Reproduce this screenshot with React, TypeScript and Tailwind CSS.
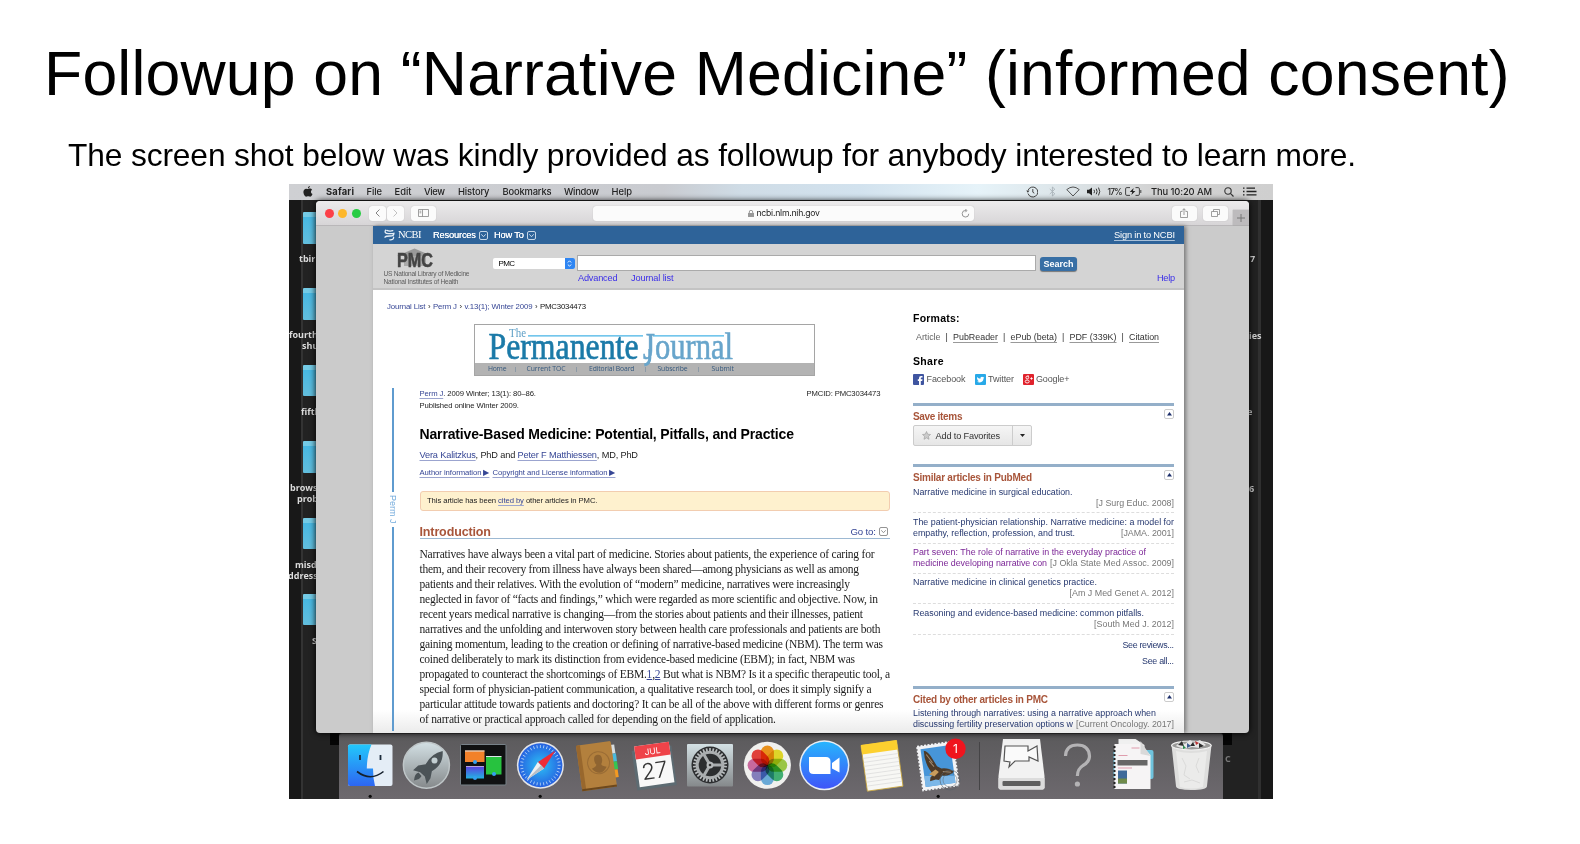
import { useLayoutEffect, useRef, useState } from "react";
import type { ReactNode } from "react";

/** Single line of text tracked out (or in) so that it spans exactly `w` pixels. */
function Fit({ w, className = "", children }: { w: number; className?: string; children: ReactNode }) {
  const ref = useRef<HTMLSpanElement>(null);
  const [tracking, setTracking] = useState(0);
  useLayoutEffect(() => {
    const el = ref.current;
    if (!el) return;
    const count = (el.textContent ?? "").length;
    if (count > 1) setTracking((w - el.getBoundingClientRect().width) / (count - 1));
  }, [w]);
  return (
    <span className={`block shrink-0 whitespace-nowrap ${className}`} style={{ width: w }}>
      <span ref={ref} style={{ letterSpacing: tracking }}>
        {children}
      </span>
    </span>
  );
}

/* ---------- desktop ---------- */

const folders = [
  { labels: [{ t: "tbird", c: "pl-[10px]" }] },
  { labels: [{ t: "fourth", c: "pl-0" }, { t: "shu", c: "pl-[13px]" }] },
  { labels: [{ t: "fifth", c: "pl-[12px]" }] },
  { labels: [{ t: "browse", c: "pl-[1px]" }, { t: "prob", c: "pl-[8px]" }] },
  { labels: [{ t: "misd", c: "pl-[6px]" }, { t: "ddresse", c: "-ml-[1px]" }] },
  { labels: [{ t: "S", c: "pl-[23px]" }] },
];

function Desktop() {
  return (
    <div className="absolute inset-0 flex justify-between bg-[#222] pt-4">
      <div className="flex h-full w-11 flex-col overflow-hidden bg-[linear-gradient(90deg,#181818_0_12px,#333_12px_14px,#222_14px)] pt-3 font-['Open_Sans',sans-serif] text-[9px] font-bold leading-[11px] text-[#dcdcdc]">
        {folders.map((f, i) => (
          <div key={i} className="h-[76.4px] shrink-0">
            <div className="ml-[14px] h-[31.5px] w-8 rounded-[1px] border-t-[5px] border-[#74cbe6] bg-gradient-to-b from-[#47b8e2] to-[#62bedd]" />
            <div className="pt-[9.500px]">
              {f.labels.map((l) => (
                <div key={l.t} className={l.c}>{l.t}</div>
              ))}
            </div>
          </div>
        ))}
      </div>
      <div className="flex h-full w-[49px] flex-col bg-[linear-gradient(90deg,#222_0_34px,#303030_34px_37px,#181818_37px)] pl-[25px] pt-[53px] font-['Open_Sans',sans-serif] text-[9px] font-bold leading-[11px] text-[#d0d0d0]">
        <div className="h-[76.5px] pl-[1px]">7</div>
        <div className="h-[76.5px]">ies</div>
        <div className="h-[76.5px] -ml-[2px]">e</div>
        <div className="h-[270px]">6</div>
        <div className="-ml-6 text-[#777]">C</div>
      </div>
    </div>
  );
}

/* ---------- menu bar ---------- */

function MenuBar() {
  return (
    <div className="relative flex h-4 items-center bg-[linear-gradient(90deg,#cfd0d3_0%,#c9cbd0_38%,#cfdce6_46%,#d2e2ee_58%,#e6f3f9_70%,#dde6ea_78%,#d2d2d2_88%,#cfcfcf_100%)] pb-px font-['Inter',sans-serif] text-[9.4px] font-medium leading-[14px] text-[#222]">
      <svg className="ml-[14px] mb-px h-[11px] w-[10px]" viewBox="0 0 10 11" fill="#222">
        <path d="M6.9 0C7 1 6 2.300 4.900 2.300 4.800 1.200 5.900.1 6.900 0zM5 3c.6 0 1-.4 2-.4.8 0 1.600.4 2.100 1.100C7.300 4.800 7.600 7.200 9.500 7.900 9 9.200 8 10.700 7 10.700c-.7 0-1-.4-1.900-.4-.9 0-1.200.4-1.900.4C1.900 10.700.4 8.200.4 6.100.4 4 1.700 2.700 3.200 2.700 4 2.700 4.500 3 5 3z" />
      </svg>
      <Fit w={28} className="ml-[13px] font-bold">Safari</Fit>
      <Fit w={15.500} className="ml-[12.500px]">File</Fit>
      <Fit w={17} className="ml-[12.500px]">Edit</Fit>
      <Fit w={21} className="ml-[12.500px]">View</Fit>
      <Fit w={31.500} className="ml-[13px]">History</Fit>
      <Fit w={49} className="ml-[13px]">Bookmarks</Fit>
      <Fit w={35} className="ml-[12.500px]">Window</Fit>
      <Fit w={20.500} className="ml-[12.500px]">Help</Fit>
      <svg className="ml-auto h-3 w-3" viewBox="0 0 12 12" fill="none" stroke="#333" strokeWidth=".9">
        <path d="M2 7.500A5 5 0 1 0 2.200 4M6.800 3v3.200l1.500 1" /><path d="M.3 4.500h3.200L1.800 6.800z" fill="#333" stroke="none" />
      </svg>
      <svg className="ml-[11px] h-[11px] w-[7px]" viewBox="0 0 7 11" fill="none" stroke="#a9b2b8" strokeWidth=".9">
        <path d="M.8 3l5 4.800L3.400 10V1l2.400 2.200L.8 8" />
      </svg>
      <svg className="ml-[10px] h-[11px] w-[14px]" viewBox="0 0 14 11" fill="none" stroke="#444" strokeWidth=".9">
        <path d="M.8 3.600Q7-1.600 13.200 3.600L7 10z" />
      </svg>
      <svg className="ml-[7px] h-[11px] w-[15px]" viewBox="0 0 15 11" fill="none" stroke="#222" strokeWidth=".9">
        <path d="M0 3.800h2L5 1.400v8.200L2 7.200H0z" fill="#222" stroke="none" /><path d="M7 3.800q1 1.700 0 3.400M9.200 2.700q1.800 2.800 0 5.600M11.500 1.600q2.500 3.900 0 7.800" />
      </svg>
      <Fit w={15} className="ml-[6px] text-[8.400px]">17%</Fit>
      <svg className="ml-[2px] h-[9px] w-[17px]" viewBox="0 0 17 9" fill="none" stroke="#333" strokeWidth=".9">
        <path d="M5 .6H1.800Q.6.6.6 1.800v5.400q0 1.200 1.200 1.200H5M10.500.6h2.700q1.200 0 1.200 1.200v5.400q0 1.200-1.200 1.200h-2.700M15.800 3v3" /><path d="M8.600 1L4.800 5h2.400l-.8 3L10.400 4H8z" fill="#222" stroke="none" />
      </svg>
      <Fit w={61} className="ml-[9.500px]">Thu 10:20 AM</Fit>
      <svg className="ml-[12px] h-[10px] w-[10px]" viewBox="0 0 10 10" fill="none" stroke="#333" strokeWidth="1.1">
        <circle cx="4" cy="4" r="3.200" /><path d="M6.400 6.400L9.500 9.500" />
      </svg>
      <svg className="ml-[9px] mr-[16px] h-[9px] w-[14px]" viewBox="0 0 14 9" stroke="#222" strokeWidth="1.300">
        <path d="M0 1.200h1.500M0 4.500h1.500M0 7.800h1.500M3.500 1.200H12M3.500 4.500H13.500M3.500 7.800H13.500" />
      </svg>
    </div>
  );
}

/* ---------- Safari toolbar ---------- */

const btn = "flex h-[15px] shrink-0 items-center justify-center rounded-[3px] bg-[#fbfbfb] shadow-[0_0_1px_#aaa]";

function Toolbar() {
  return (
    <div className="flex h-[25px] shrink-0 items-center border-b border-[#b9b7b9] bg-gradient-to-b from-[#ecebec] to-[#d7d5d7] pl-[8.500px]">
      <span className="h-[9px] w-[9px] rounded-full bg-[#fc4048]" />
      <span className="ml-[4.500px] h-[9px] w-[9px] rounded-full bg-[#fdb72b]" />
      <span className="ml-[4.500px] h-[9px] w-[9px] rounded-full bg-[#27cc43]" />
      <span className={`${btn} ml-[8.500px] w-[17px]`}>
        <svg className="h-2 w-[5px]" viewBox="0 0 5 8" fill="none" stroke="#777" strokeWidth=".9"><path d="M4.500.5L1 4l3.500 3.500" /></svg>
      </span>
      <span className={`${btn} ml-px w-[17px]`}>
        <svg className="h-2 w-[5px]" viewBox="0 0 5 8" fill="none" stroke="#bbb" strokeWidth=".9"><path d="M.5.5L4 4 .5 7.500" /></svg>
      </span>
      <span className={`${btn} ml-[7px] w-[25px]`}>
        <svg className="h-2 w-[11px]" viewBox="0 0 11 8" fill="none" stroke="#888" strokeWidth=".8"><path d="M.5.5h10v7H.5zM4.500.5v7M1.500 2.200h1.800M1.500 3.800h1.800" /></svg>
      </span>
      <div className="ml-[156.500px] flex h-[15px] w-[381px] shrink-0 items-center rounded-[3px] bg-[#fbfbfb] shadow-[0_0_1px_#aaa]">
        <svg className="ml-[155px] h-[7px] w-[6px]" viewBox="0 0 6 7"><rect y="3" width="6" height="4" fill="#999" /><path d="M1.300 3V2a1.700 1.700 0 0 1 3.400 0v1" fill="none" stroke="#999" /></svg>
        <Fit w={63.500} className="ml-[3px] font-['Inter',sans-serif] text-[8.700px] leading-[14px] text-[#222]">ncbi.nlm.nih.gov</Fit>
        <svg className="ml-auto mr-1 h-[9px] w-[9px]" viewBox="0 0 9 9" fill="none" stroke="#888" strokeWidth=".9"><path d="M5 1.500A3.300 3.300 0 1 0 7.800 4.800M4.200 0l1.800 1.500L4.400 3.200" /></svg>
      </div>
      <span className={`${btn} ml-[198px] w-[25px]`}>
        <svg className="h-[10px] w-2" viewBox="0 0 8 10" fill="none" stroke="#888" strokeWidth=".8"><path d="M2.500 3.500h-2v6h7v-6h-2M4 7V.8M2.200 2.500L4 .7l1.800 1.800" /></svg>
      </span>
      <span className={`${btn} ml-[6px] w-[25px]`}>
        <svg className="h-2 w-[9px]" viewBox="0 0 9 8" fill="none" stroke="#888" strokeWidth=".8"><path d="M.5 2.500h6v5h-6zM2.500 2.500v-2h6v5h-2" /></svg>
      </span>
      <span className="ml-auto flex h-[15px] w-4 items-center justify-center self-end bg-[#bdbbbd] shadow-[0_0_1px_#888]">
        <svg className="h-2 w-2" viewBox="0 0 8 8" stroke="#777"><path d="M4 0v8M0 4h8" /></svg>
      </span>
    </div>
  );
}

/* ---------- page header ---------- */

function BoxArrow({ className = "", color = "#d7e3ef" }: { className?: string; color?: string }) {
  return (
    <svg className={`h-[9px] w-[9px] shrink-0 ${className}`} viewBox="0 0 9 9" fill="none" stroke={color} strokeWidth=".9">
      <rect x=".5" y=".5" width="8" height="8" rx="1.500" /><path d="M2.300 3.300l2.200 2.400 2.200-2.400" />
    </svg>
  );
}

function NcbiBar() {
  return (
    <div className="flex h-[18px] items-center bg-[#2e6399] pl-[11px] pr-[9px] text-[9.300px] leading-[14px] text-white">
      <svg className="h-[12px] w-[11px]" viewBox="0 0 11 12" fill="none" stroke="#e4edf6" strokeWidth="1.300" strokeLinecap="round">
        <path d="M1.500 1.200Q0 4.600 4.500 4.700T10 4.200M9.800 4.400Q10.200 7 6 7T1 8.200M9.600 8.200Q9.800 11 5.800 10.800M2.800 1.400q3 1.200 6 .2" />
      </svg>
      <Fit w={23.500} className="ml-[3px] font-['Liberation_Serif',serif] text-[10.500px]">NCBI</Fit>
      <Fit w={43} className="ml-[11.500px] [text-shadow:0_0_.5px_#fff]">Resources</Fit>
      <BoxArrow className="ml-[3px]" />
      <Fit w={30} className="ml-[6px] [text-shadow:0_0_.5px_#fff]">How To</Fit>
      <BoxArrow className="ml-[3px]" />
      <Fit w={61} className="ml-auto underline decoration-[#a9c0d8] underline-offset-[1.500px]">Sign in to NCBI</Fit>
    </div>
  );
}

function SearchHeader() {
  return (
    <div className="flex h-[46px] border-b-2 border-[#c3c3c3] bg-[#d4d4d4]">
      <div className="w-[120px] pl-[10.500px] pt-[4px] text-[6.600px] leading-[8px] text-[#5c5c5c]">
        <svg className="mb-[1.500px] ml-[12px] block h-[20px] w-[38px] overflow-visible" viewBox="0 0 38 20">
          <path d="M1 8L18.500.5 36 8z" fill="#999" /><path d="M8 8h22v10H8z" fill="#a9a9a9" />
          <text x="1" y="19" fontFamily="Liberation Sans" fontWeight="700" fontSize="19.500" fill="#444" stroke="#444" strokeWidth=".5" textLength="36" lengthAdjust="spacingAndGlyphs">PMC</text>
        </svg>
        <Fit w={86}>US National Library of Medicine</Fit>
        <Fit w={75}>National Institutes of Health</Fit>
      </div>
      <div className="flex h-[11px] w-[82px] shrink-0 items-center self-start overflow-hidden rounded-[2px] bg-white text-[8px] leading-[11px] mt-[14px]">
        <Fit w={16.500} className="ml-[5.500px]">PMC</Fit>
        <span className="ml-auto flex h-full w-[10.500px] items-center justify-center bg-[#2f86f3]">
          <svg className="h-[7px] w-[5px]" viewBox="0 0 5 7" fill="none" stroke="#fff" strokeWidth=".9"><path d="M.8 2.500L2.500.8l1.700 1.700M.8 4.500l1.700 1.700 1.700-1.700" /></svg>
        </span>
      </div>
      <div className="ml-[2px] pt-[11px]">
        <div className="h-4 w-[458.500px] border border-[#aaa] bg-white" />
        <div className="flex h-[14px] items-center text-[9.200px] leading-[12px] text-[#3b2ee8]">
          <Fit w={39.500} className="ml-px">Advanced</Fit>
          <Fit w={42.500} className="ml-[13.500px]">Journal list</Fit>
        </div>
      </div>
      <div className="flex flex-1 flex-col pt-[12.500px] pl-[4.500px] pr-[9px]">
        <div className="flex h-[14px] w-[37px] items-center justify-center rounded-[3px] bg-[#386fa5] text-[9px] font-bold leading-[12px] text-white shadow-[0_1px_1px_#777]">
          <Fit w={30}>Search</Fit>
        </div>
        <Fit w={18} className="ml-auto text-[9.200px] leading-[14px] text-[#3b2ee8]">Help</Fit>
      </div>
    </div>
  );
}

/* ---------- article ---------- */

const link = "underline decoration-[#9ba4cf] underline-offset-[2px] text-[#364695]";

function JournalBanner() {
  return (
    <div className="ml-[101px] mt-3 flex h-[52px] w-[341px] flex-col border border-[#a5a5a5]">
      <svg className="block h-[38px] w-[339px] shrink-0 overflow-visible relative" viewBox="0 0 339 38">
        <rect y="38" width="339" height="12" fill="#b3b3b3" />
        <path d="M53 10.900H168M178 10.900H249" stroke="#47b4e6" strokeWidth="1.200" />
        <g fontFamily="Liberation Serif">
          <text x="34" y="11.800" fontSize="13" fill="#5d9fc6" textLength="17" lengthAdjust="spacingAndGlyphs">The</text>
          <text x="13.500" y="33.800" fontSize="38.500" fill="#1b7aa8" stroke="#1b7aa8" strokeWidth=".7" textLength="150" lengthAdjust="spacingAndGlyphs">Permanente</text>
          <text x="168" y="33.800" fontSize="38.500" fill="#68a5cb" stroke="#68a5cb" strokeWidth=".6" textLength="90" lengthAdjust="spacingAndGlyphs">Journal</text>
        </g>
        <path d="M174.800 24v9q0 6-5.500 7" stroke="#68a5cb" strokeWidth="3" fill="none" />
      </svg>
      <div className="relative flex h-3 items-center font-['Open_Sans',sans-serif] text-[6.800px] leading-3 text-[#35587d]">
        <Fit w={18.500} className="ml-[13px]">Home</Fit>
        <i className="ml-[8px] h-[5px] w-px bg-[#8d9aa6]" />
        <Fit w={39} className="ml-[11px]">Current TOC</Fit>
        <i className="ml-[10px] h-[5px] w-px bg-[#8d9aa6]" />
        <Fit w={45.500} className="ml-[12.500px]">Editorial Board</Fit>
        <i className="ml-[10px] h-[5px] w-px bg-[#8d9aa6]" />
        <Fit w={30} className="ml-[12px]">Subscribe</Fit>
        <i className="ml-[10px] h-[5px] w-px bg-[#8d9aa6]" />
        <Fit w={22.500} className="ml-[13px]">Submit</Fit>
      </div>
    </div>
  );
}

const bodyLines: { w: number; t: ReactNode }[] = [
  { w: 455, t: "Narratives have always been a vital part of medicine. Stories about patients, the experience of caring for" },
  { w: 439.500, t: "them, and their recovery from illness have always been shared—among physicians as well as among" },
  { w: 430.500, t: "patients and their relatives. With the evolution of “modern” medicine, narratives were increasingly" },
  { w: 458.500, t: "neglected in favor of “facts and findings,” which were regarded as more scientific and objective. Now, in" },
  { w: 443.500, t: "recent years medical narrative is changing—from the stories about patients and their illnesses, patient" },
  { w: 461, t: "narratives and the unfolding and interwoven story between health care professionals and patients are both" },
  { w: 463.500, t: "gaining momentum, leading to the creation or defining of narrative-based medicine (NBM). The term was" },
  { w: 435.500, t: "coined deliberately to mark its distinction from evidence-based medicine (EBM); in fact, NBM was" },
  {
    w: 470.500,
    t: (
      <>
        propagated to counteract the shortcomings of EBM.<span className="text-[#364695] underline">1</span>,
        <span className="text-[#364695] underline">2</span> But what is NBM? Is it a specific therapeutic tool, a
      </>
    ),
  },
  { w: 452, t: "special form of physician-patient communication, a qualitative research tool, or does it simply signify a" },
  { w: 464, t: "particular attitude towards patients and doctoring? It can be all of the above with different forms or genres" },
  { w: 356.500, t: "of narrative or practical approach called for depending on the field of application." },
];

function Article() {
  return (
    <div className="flex w-[540px] shrink-0 flex-col">
      <div className="mt-[9px] flex h-3 items-center pl-[14px] text-[7.800px] leading-3 text-[#364695] mb-px pt-[4px]">
        <Fit w={38.500}>Journal List</Fit>
        <span className="w-[7.500px] text-center text-[#222]">›</span>
        <Fit w={24}>Perm J</Fit>
        <span className="w-[7.500px] text-center text-[#222]">›</span>
        <Fit w={68}>v.13(1); Winter 2009</Fit>
        <span className="w-[7.500px] text-center text-[#222]">›</span>
        <Fit w={46} className="text-[#111]">PMC3034473</Fit>
      </div>
      <JournalBanner />
      <div className="mt-3 flex">
        <div className="flex w-[46.500px] shrink-0 flex-col items-center pr-[6.500px]">
          <span className="h-[103.500px] w-[2.500px] bg-[#5f9bcf]" />
          <span className="flex h-[35.500px] w-3 items-center justify-center text-[9px] leading-3 text-[#72aadb] [writing-mode:vertical-rl]">Perm J</span>
          <span className="h-[204px] w-[2.500px] bg-[#5f9bcf]" />
        </div>
        <div className="w-[470.500px] shrink-0 text-[#222]">
          <div className="flex h-3 items-center justify-between pr-[9.500px] text-[7.700px] leading-3">
            <Fit w={116.500}><span className={link}>Perm J</span>. 2009 Winter; 13(1): 80–86.</Fit>
            <Fit w={74}>PMCID: PMC3034473</Fit>
          </div>
          <Fit w={99.500} className="h-[11px] text-[7.700px] leading-[11px]">Published online Winter 2009.</Fit>
          <h1 className="mt-[13px] text-[14px] font-bold leading-5 text-black"><Fit w={374.500}>Narrative-Based Medicine: Potential, Pitfalls, and Practice</Fit></h1>
          <Fit w={218.500} className="mt-[5px] text-[9.200px] leading-[13px]">
            <span className={link}>Vera Kalitzkus</span>, PhD and <span className={link}>Peter F Matthiessen</span>, MD, PhD
          </Fit>
          <div className="mt-[5px] flex text-[7.700px] leading-3">
            <Fit w={70} className={link}>Author information ▶</Fit>
            <Fit w={123} className={`ml-[3px] ${link}`}>Copyright and License information ▶</Fit>
          </div>
          <div className="mt-3 flex h-5 items-center rounded-[3px] border border-[#f2cdb0] bg-[#fef1ce] pl-[6.500px] text-[7.700px] leading-3">
            <Fit w={170.500}>This article has been <span className={link}>cited by</span> other articles in PMC.</Fit>
          </div>
          <div className="mt-[11px] flex h-[17px] items-center border-b border-[#9db9d3] pr-[2px] pt-[3px]">
            <Fit w={71.500} className="text-[12.500px] font-bold leading-4 text-[#a8553a]">Introduction</Fit>
            <Fit w={25.500} className="ml-auto text-[9.600px] leading-4 text-[#364695]">Go to:</Fit>
            <BoxArrow className="ml-[3px]" color="#888" />
          </div>
          <div className="mt-[8px] font-['Liberation_Serif',serif] text-[11.500px] leading-[15px] text-[#1c1c1c]">
            {bodyLines.map((l, i) => (
              <Fit key={i} w={l.w}>{l.t}</Fit>
            ))}
          </div>
        </div>
      </div>
    </div>
  );
}

/* ---------- sidebar ---------- */

function SectionHead({ w, title }: { w: number; title: string }) {
  return (
    <div className="flex h-5 justify-between border-t-[3.500px] border-[#94afc9] pt-[3px]">
      <Fit w={w} className="pt-px text-[10px] font-bold leading-[13px] text-[#a8553a]">{title}</Fit>
      <span className="flex h-[10px] w-[10px] items-center justify-center rounded-[2px] border border-[#ccc]">
        <svg className="h-1 w-[5px]" viewBox="0 0 5 4" fill="#1d2f6b"><path d="M2.500 0L5 3.500H0z" /></svg>
      </span>
    </div>
  );
}

interface Entry { a: string; aw: number; b?: string; bw?: number; cite: string; cw: number; visited?: boolean }

const similar: Entry[] = [
  { a: "Narrative medicine in surgical education.", aw: 159.500, cite: "[J Surg Educ. 2008]", cw: 78 },
  { a: "The patient-physician relationship. Narrative medicine: a model for", aw: 261, b: "empathy, reflection, profession, and trust.", bw: 162, cite: "[JAMA. 2001]", cw: 53 },
  { a: "Part seven: The role of narrative in the everyday practice of", aw: 233, b: "medicine developing narrative con", bw: 134, cite: "[J Okla State Med Assoc. 2009]", cw: 124, visited: true },
  { a: "Narrative medicine in clinical genetics practice.", aw: 184, cite: "[Am J Med Genet A. 2012]", cw: 104.500 },
  { a: "Reasoning and evidence-based medicine: common pitfalls.", aw: 231, cite: "[South Med J. 2012]", cw: 80 },
];

function EntryRow({ e }: { e: Entry }) {
  return (
    <div className={`text-[8.900px] leading-[11px] ${e.visited ? "text-[#7b2596]" : "text-[#26386f]"}`}>
      <Fit w={e.aw}>{e.a}</Fit>
      <div className="flex">
        {e.b && <Fit w={e.bw ?? 0}>{e.b}</Fit>}
        <Fit w={e.cw} className="ml-auto text-[#777]">{e.cite}</Fit>
      </div>
    </div>
  );
}

const fmt = "underline decoration-[#999] underline-offset-[2px]";

function Sidebar() {
  return (
    <div className="w-[261px] shrink-0 pt-[22px] text-[#333]">
      <Fit w={46.500} className="text-[10.500px] font-bold leading-[13px] text-black">Formats:</Fit>
      <div className="mt-[6px] flex text-[8.900px] leading-3">
        <Fit w={24.500} className="ml-[3px] text-[#666]">Article</Fit>
        <span className="w-[12.500px] text-center">|</span>
        <Fit w={45} className={fmt}>PubReader</Fit>
        <span className="w-[12.500px] text-center">|</span>
        <Fit w={46.500} className={fmt}>ePub (beta)</Fit>
        <span className="w-[12.500px] text-center">|</span>
        <Fit w={47} className={fmt}>PDF (339K)</Fit>
        <span className="w-[12.500px] text-center">|</span>
        <Fit w={30} className={fmt}>Citation</Fit>
      </div>
      <Fit w={30.500} className="mt-[11.500px] text-[10.500px] font-bold leading-[13px] text-black">Share</Fit>
      <div className="mt-[6.500px] flex h-[11px] items-center text-[9px] leading-[11px] text-[#555]">
        <svg className="h-[11px] w-[11px]" viewBox="0 0 11 11"><rect width="11" height="11" rx="1" fill="#3f55a0" /><path d="M6 11V7H4.800V5.300H6V4q0-2 2-2h1.500v1.600H8.400q-.6 0-.6.6v1.100h1.700L9.200 7H7.800v4z" fill="#fff" /></svg>
        <Fit w={39} className="ml-[2.500px]">Facebook</Fit>
        <svg className="ml-[9px] h-[11px] w-[11px]" viewBox="0 0 11 11"><rect width="11" height="11" rx="1" fill="#28a9e8" /><path d="M2 3q1.500 1.600 3.400 1.700Q5.200 2.800 7 2.700q.8 0 1.200.5l1-.3-.6 1 .7-.1-.8.8Q8.300 8.300 4.800 8.500 3 8.500 2 7.700q1.200 0 2-.6Q2.800 6.800 2.600 6H3Q2 5.400 2.100 4.400z" fill="#fff" /></svg>
        <Fit w={26} className="ml-[2.500px]">Twitter</Fit>
        <svg className="ml-[9px] h-[11px] w-[11px]" viewBox="0 0 11 11"><rect width="11" height="11" rx="1" fill="#e0222c" /><g fill="none" stroke="#fff" strokeWidth=".9"><circle cx="4.300" cy="3.500" r="1.400" /><ellipse cx="4.200" cy="7.500" rx="2" ry="1.500" /><path d="M4.500 2H6M7.300 4.500h2.400M8.500 3.300v2.400" /></g></svg>
        <Fit w={33.500} className="ml-[2px]">Google+</Fit>
      </div>
      <div className="mt-[18px]"><SectionHead w={49.500} title="Save items" /></div>
      <div className="mt-[2px] flex h-[21px] w-[119px] items-center rounded-[2px] border border-[#ccc] bg-gradient-to-b from-[#f5f5f5] to-[#e6e6e6]">
        <svg className="ml-[8px] h-[9px] w-[9px]" viewBox="0 0 9 9" fill="#ccc" stroke="#999" strokeWidth=".6"><path d="M4.500.5l1.200 2.700 2.800.3-2.100 1.900.6 2.900-2.500-1.500L2 8.300l.6-2.900L.5 3.500l2.800-.3z" /></svg>
        <Fit w={64.500} className="ml-[4.500px] text-[9.200px] leading-3">Add to Favorites</Fit>
        <span className="ml-auto flex h-full w-[19px] items-center justify-center border-l border-[#ccc]">
          <svg className="h-[3px] w-[5px]" viewBox="0 0 5 3" fill="#222"><path d="M0 0h5L2.500 3z" /></svg>
        </span>
      </div>
      <div className="mt-[18px]"><SectionHead w={119} title="Similar articles in PubMed" /></div>
      <div className="pt-[2.500px]">
        {similar.map((e) => (
          <div key={e.a} className="mb-[3.400px] h-[26.900px] border-b border-dashed border-[#ddd]"><EntryRow e={e} /></div>
        ))}
      </div>
      <div className="mt-[4px] flex flex-col items-end text-[8.900px] leading-[12px] text-[#26386f]">
        <Fit w={51.500}>See reviews...</Fit>
        <Fit w={32} className="mt-[4.500px]">See all...</Fit>
      </div>
      <div className="mt-[18.500px]"><SectionHead w={135} title="Cited by other articles in PMC" /></div>
      <div className="pt-[2.200px]">
        <EntryRow e={{ a: "Listening through narratives: using a narrative approach when", aw: 243, b: "discussing fertility preservation options w", bw: 160, cite: "[Current Oncology. 2017]", cw: 98 }} />
      </div>
    </div>
  );
}

function SafariWindow() {
  return (
    <div className="absolute left-[27px] top-[17px] flex h-[532px] w-[933px] flex-col overflow-hidden rounded-[4px] bg-[#cbcbcb] shadow-[0_0_6px_#000]">
      <Toolbar />
      <div className="ml-[57px] h-[507px] w-[811px] overflow-hidden bg-white shadow-[2px_0_4px_#777]">
        <NcbiBar />
        <SearchHeader />
        <div className="flex h-[443px] overflow-hidden bg-[linear-gradient(180deg,#fff_0_420px,#ebebeb_443px)]">
          <Article />
          <Sidebar />
        </div>
      </div>
    </div>
  );
}

/* ---------- dock ---------- */

const ticks = Array.from({ length: 36 }, (_, i) => i * 10);
const teeth = Array.from({ length: 30 }, (_, i) => i * 12);
const petals = ["#f79a1e", "#ece22c", "#a4d24a", "#45b97a", "#6fb4e6", "#8c86c9", "#d46fa8", "#ee4540"];

const dockApps: { name: string; running?: boolean; art: ReactNode }[] = [
  {
    name: "finder", running: true, art: (
      <>
        <rect x="6" y="10.500" width="44.500" height="41.500" rx="2" fill="#e4edf6" />
        <path d="M8 10.500H29.500Q25 21 24.800 34.500H31Q31 44 33 52H8q-2 0-2-2V12.500q0-2 2-2z" fill="url(#finder)" />
        <path d="M18 21v5M38.500 21v5" stroke="#1b2b3c" strokeWidth="1.800" />
        <path d="M15 37.500Q28.500 48 41.500 37.500" stroke="#15202c" strokeWidth="1.600" fill="none" />
      </>
    ),
  },
  {
    name: "launchpad", art: (
      <>
        <circle cx="28.400" cy="31.300" r="23" fill="url(#silver)" stroke="#bfc6c8" strokeWidth="1.500" />
        <path d="M47 16.500Q48 31 35.500 38L34 45.500l-4 6-2-8-5-4.500-7.500-2 5.500-5 8-1.500Q35 19 47 16.500z" fill="#4b5357" transform="translate(.5 1.500) scale(.94)" /><circle cx="36.500" cy="26.500" r="3" fill="#c3cfd2" /><path d="M20.500 38.500q-4 1-4.500 8 6-1 7.500-4.500z" fill="#4b5357" />
      </>
    ),
  },
  {
    name: "mission", art: (
      <>
        <rect x="5.500" y="10.500" width="45.500" height="40.500" rx="1" fill="#101112" stroke="#78838a" strokeWidth="1" />
        <rect x="10" y="16.500" width="19.500" height="11.500" fill="#f2812a" /><path d="M10 17H29.500" stroke="#dfe5e8" />
        <rect x="11" y="32.500" width="18" height="12" fill="url(#spaces)" /><path d="M11 32.500H29" stroke="#b9a5e0" />
        <rect x="31" y="22.500" width="15.500" height="18" fill="#27c23f" /><path d="M31 22.500H46.500" stroke="#dfe5e8" />
        <circle cx="20" cy="28" r="2" fill="#35a0f0" /><circle cx="20" cy="44" r="2" fill="#35a0f0" /><circle cx="39" cy="40" r="2" fill="#35a0f0" />
      </>
    ),
  },
  {
    name: "safari", running: true, art: (
      <>
        <circle cx="28.400" cy="31.300" r="23.500" fill="#e3e5e8" /><circle cx="28.400" cy="31.300" r="22" fill="url(#compass)" />
        {ticks.map((a) => <path key={a} d="M28.400 11v3" stroke="#cfe6fb" strokeWidth=".7" transform={`rotate(${a} 28.400 31.300)`} />)}
        <path d="M43.500 16.500L32 34.500 26 28z" fill="#ee2b36" /><path d="M14.500 46L25.800 28 32 34.500z" fill="#eef0f2" /><path d="M14.500 46L32 34.500l-3-3.200z" fill="#b8c0c8" />
      </>
    ),
  },
  {
    name: "contacts", art: (
      <g transform="rotate(-8 28 32)">
        <path d="M43 13h5v9h-5z" fill="#d7dde0" /><path d="M43 22h5.500v8H43z" fill="#4ab9dd" /><path d="M43 30h5.500v8H43z" fill="#35c552" /><path d="M43 38h5v8h-5z" fill="#f49a22" />
        <rect x="10" y="9" width="35" height="46" rx="2" fill="#b3803d" /><path d="M10 9h4v46h-4z" fill="#98672d" /><path d="M10 54h35" stroke="#6d481c" strokeWidth="2" />
        <circle cx="30" cy="29" r="11" fill="none" stroke="#9a6c35" strokeWidth="1" /><path d="M26 26q0-5 4-5t4 5q0 3-1.500 4.500 0 2 5 3.500Q34 39 30 39t-7.500-5q5-1.500 5-3.500Q26 29 26 26z" fill="#8f6431" />
      </g>
    ),
  },
  {
    name: "calendar", art: (
      <g transform="rotate(-8 28 32)">
        <rect x="8" y="14" width="40" height="40" fill="#5d6b72" /><rect x="11" y="10" width="35" height="41" fill="#f8f8f8" /><rect x="11" y="10" width="35" height="13" fill="#ef4349" />
        <text x="28.500" y="20" fontSize="8.500" fontFamily="Inter" textAnchor="middle" fill="#fff">JUL</text>
        <text x="28" y="44.500" fontSize="22.500" fontFamily="Inter" fontWeight="300" textAnchor="middle" fill="#333">27</text>
      </g>
    ),
  },
  {
    name: "preferences", art: (
      <>
        <rect x="5" y="10" width="46" height="42.500" rx="1" fill="url(#silver)" />
        <circle cx="28" cy="31" r="18.500" fill="#2c2e30" />
        {teeth.map((a) => <path key={a} d="M28 14v3.500" stroke="#b9bdbf" strokeWidth="1.700" transform={`rotate(${a} 28 31)`} />)}
        <circle cx="28" cy="31" r="12.800" fill="none" stroke="#aaaeb0" strokeWidth="3" />
        <path d="M28 31H40.600M28 31L21.600 20M28 31L21.600 42" stroke="#a8acae" strokeWidth="3" /><circle cx="28" cy="31" r="3.500" fill="#b5b9bb" /><circle cx="28" cy="31" r="1.300" fill="#333" />
      </>
    ),
  },
  {
    name: "photos", art: (
      <>
        <circle cx="28.400" cy="31.300" r="23.500" fill="#f0f0ee" />
        {petals.map((c, i) => <rect key={c} className="mix-blend-multiply" x="21.900" y="11.500" width="13" height="20" rx="6.500" fill={c} transform={`rotate(${i * 45} 28.400 31.300)`} />)}
      </>
    ),
  },
  {
    name: "zoom", art: (
      <>
        <circle cx="28.400" cy="31.300" r="25" fill="#e8eef5" /><circle cx="28.400" cy="31.300" r="23.500" fill="url(#zoom)" />
        <path d="M13 23h17q4.500 0 4.500 4.500V40h-17q-4.500 0-4.500-4.500zM36 29l7.500-5.500v15L36 34.500z" fill="#fff" />
      </>
    ),
  },
  {
    name: "notes", art: (
      <g transform="rotate(-8 28 32)">
        <rect x="11" y="9" width="36" height="46" fill="#f7f7f4" stroke="#c9a437" strokeWidth=".8" /><rect x="11" y="8.500" width="36" height="9.500" fill="#fcd02f" />
        {[22, 26, 30, 34, 38, 42, 46, 50].map((y) => <path key={y} d={`M11.500 ${y}h35`} stroke="#d6d6d6" strokeWidth=".6" />)}
      </g>
    ),
  },
  {
    name: "mail", running: true, art: (
      <>
        <g transform="rotate(-8 28 32)">
          <rect x="10" y="10" width="36" height="44" fill="#f2f3f5" stroke="#f2f3f5" strokeWidth="2" strokeDasharray="2 1.500" /><rect x="13" y="13" width="30" height="38" fill="#4795d8" />
          <path d="M13 40l30 4v7H13z" fill="#7cb7e8" />
          <path d="M16 15q4 1 7 8l4 9 4 3q7 0 12 5-6 4-12 2l-4 4-3-1-6 1 1-4 3-2-3-6Q15 25 16 15z" fill="#4d3a28" /><path d="M18 39l7-4 3 3-5 4z" fill="#c99c5b" /><path d="M18 19l5 9M20 26l4 6M32 38l8 2" stroke="#a08a70" strokeWidth="1" />
        </g>
        <circle cx="40" cy="46" r="10" fill="none" stroke="#56606a" strokeWidth="1" opacity=".6" /><circle cx="40" cy="46" r="7" fill="none" stroke="#56606a" strokeWidth=".8" opacity=".6" />
        <circle cx="45.500" cy="14.800" r="10.200" fill="#f0141e" />
        <text x="45.500" y="19" fontSize="12" fontFamily="Inter" textAnchor="middle" fill="#fff">1</text>
      </>
    ),
  },
];

const dockItems: { name: string; art: ReactNode }[] = [
  {
    name: "drive", art: (
      <>
        <path d="M10 5h37l4.500 37v11.500q0 2-2 2h-42q-2 0-2-2V42z" fill="#f2f2f2" /><path d="M5.500 44h46v9.500q0 2-2 2h-42q-2 0-2-2z" fill="#dcdcdc" />
        <rect x="9.500" y="47" width="38" height="5" rx="1" fill="#5e5e5e" />
        <path d="M12 12h23v5l9-5 1 15-9-4v4H22l-6 6 1-5-6-1z" fill="#fafafa" stroke="#555" strokeWidth="1.200" />
      </>
    ),
  },
  {
    name: "help", art: (
      <>
        <path d="M15.500 22Q16 11 27.400 11T39.500 22Q39.500 28 33 31.500 27.400 35 27.400 42" fill="none" stroke="#b4b3b5" strokeWidth="3.200" /><circle cx="27.400" cy="50" r="2.600" fill="#b4b3b5" />
      </>
    ),
  },
  {
    name: "documents", art: (
      <>
        <rect x="7.500" y="16" width="40" height="29" rx="2" fill="#6fc3dd" /><path d="M12.500 5h17l9 6v8h-26z" fill="#f0f0f0" />
        <path d="M8.500 10h26l10 11v34h-36z" fill="#f6f4f5" /><path d="M34.500 7v13l10 2z" fill="#d9d9d9" />
        <path d="M8.500 12v42" stroke="#222" strokeWidth="2" strokeDasharray="2 2" /><rect x="11.500" y="26" width="30" height="5.500" fill="#666" />
        <path d="M12 34h14M12.500 21.500h9M25.500 14h8" stroke="#d9879a" strokeWidth=".8" /><rect x="12" y="36.500" width="9" height="13" fill="#3f6a9a" /><path d="M12 44.500h9v5h-9z" fill="#6f8a4a" />
      </>
    ),
  },
  {
    name: "trash", art: (
      <>
        <path d="M8.500 11h40L44 52q0 4-15.600 4T13 52z" fill="#dededd" /><path d="M13 17l4 36q11 3 23 0l4-36Q28 21 13 17z" fill="#ebebea" />
        <path d="M19 24l4 8-2 9 6 4M36 24l-3 8 3 7M21 48l8-2 8 3" stroke="#dadad9" strokeWidth="1" fill="none" />
        <ellipse cx="28.400" cy="11.500" rx="19.800" ry="4.500" fill="#9a9a99" stroke="#f2f2f2" strokeWidth="1.200" />
        <path d="M13 12l4-4 5 2 5-4 4 3 6-3 6 5-6 3-8-1-8 2z" fill="#e6e6e6" /><path d="M15 11l4-4 2 5zM36 9l5 3-5 2zM27 12l3-4 2 4z" fill="#2d2d2d" /><path d="M24 9l4 3-4 2z" fill="#3d5b8e" /><path d="M32 7l4 2-3 2z" fill="#b33" /><path d="M20 11l3 3-3 1z" fill="#2c8a50" />
      </>
    ),
  },
];

function DockCell({ art, running }: { art: ReactNode; running?: boolean }) {
  return (
    <svg className="h-[65px] w-[56.800px] shrink-0" viewBox="0 0 56.800 65">
      {art}
      {running && <circle cx="28.200" cy="62.300" r="1.600" fill="#0c0c0c" />}
    </svg>
  );
}

function Dock() {
  return (
    <div className="absolute bottom-0 left-[41px] flex h-[66px] w-[902px] bg-[linear-gradient(180deg,#050505_0_12px,transparent_12px)] px-[9px]">
      <div className="flex h-[66px] w-[884px] shrink-0 items-end rounded-t-[3px] border-t border-[#3b3a3c] bg-gradient-to-b from-[#5b5a5c] to-[#6d696e] pl-[2.600px]">
        <svg className="absolute h-0 w-0">
          <defs>
            <linearGradient id="finder" x2="0" y2="1"><stop stopColor="#22c8fb" /><stop offset="1" stopColor="#2d66f2" /></linearGradient>
            <linearGradient id="spaces" x2="0" y2="1"><stop stopColor="#5a3fe0" /><stop offset="1" stopColor="#22b4e0" /></linearGradient>
            <linearGradient id="silver" x2="0" y2="1"><stop stopColor="#d3e0e4" /><stop offset="1" stopColor="#85898b" /></linearGradient>
            <linearGradient id="zoom" x2="0" y2="1"><stop stopColor="#27b4fd" /><stop offset="1" stopColor="#3f55f8" /></linearGradient>
            <radialGradient id="compass"><stop stopColor="#2cc0f5" /><stop offset="1" stopColor="#2661e0" /></radialGradient>
          </defs>
        </svg>
        {dockApps.map((a) => <DockCell key={a.name} art={a.art} running={a.running} />)}
        <span className="mb-[9px] ml-[13px] mr-[12.500px] h-12 w-px bg-[#454446]" />
        {dockItems.map((a) => <DockCell key={a.name} art={a.art} />)}
      </div>
    </div>
  );
}

export default function App() {
  return (
    <main className="flex h-[844px] w-[1580px] flex-col overflow-hidden bg-white font-['Liberation_Sans',sans-serif] text-black">
      <h1 className="ml-[44px] mt-[37px] text-[62.500px] leading-[73px]"><Fit w={1465.500}>Followup on “Narrative Medicine” (informed consent)</Fit></h1>
      <p className="ml-[68px] mt-[26px] h-[48px] text-[31.700px] leading-[38px]"><Fit w={1288}>The screen shot below was kindly provided as followup for anybody interested to learn more.</Fit></p>
      <section className="relative ml-[289px] h-[615px] w-[984px] shrink-0 overflow-hidden">
        <Desktop />
        <MenuBar />
        <Dock />
        <SafariWindow />
      </section>
    </main>
  );
}
